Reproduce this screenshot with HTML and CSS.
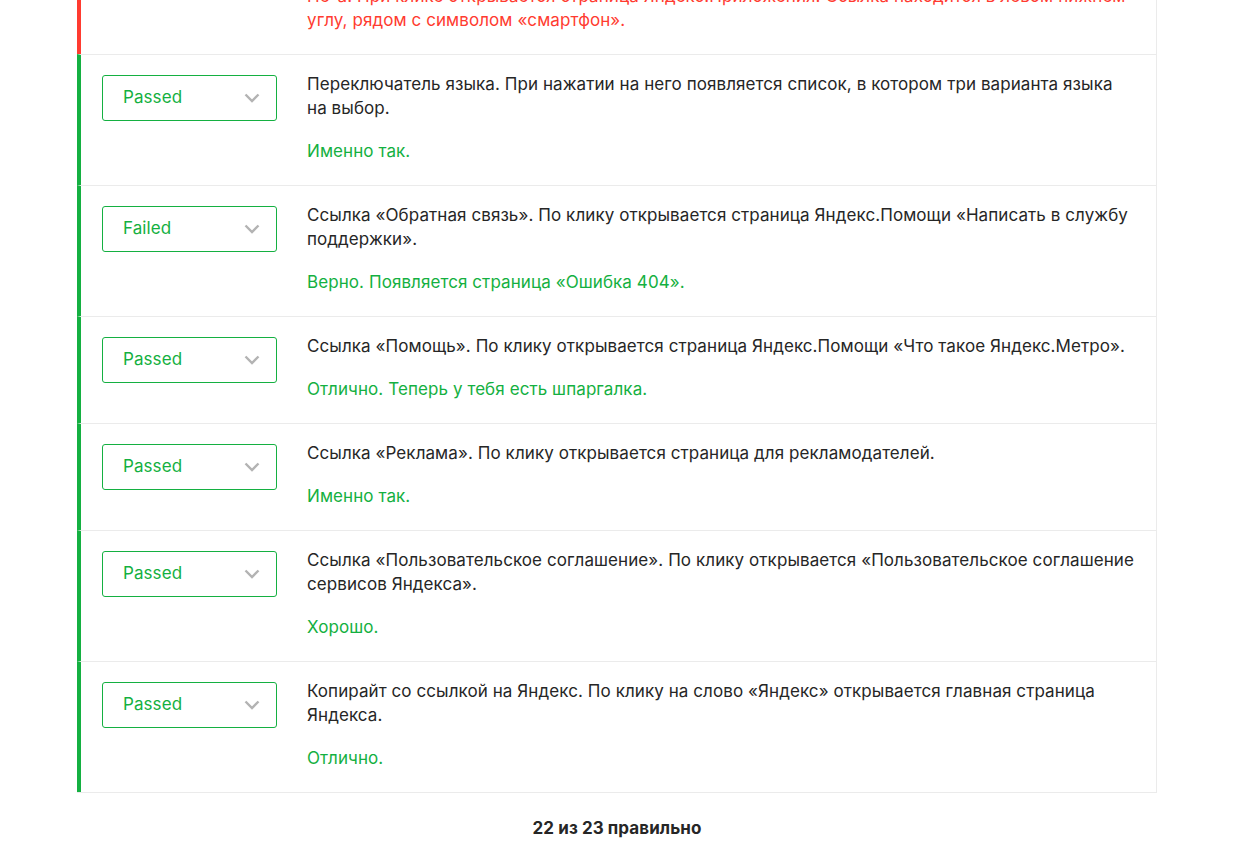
FILE: index.html
```html
<!DOCTYPE html>
<html lang="ru">
<head>
<meta charset="utf-8">
<title>Результаты</title>
<link rel="stylesheet" href="styles.css">
</head>
<body>
<main class="page">
  <div class="checklist">
    <div class="row row--wrong">
      <div class="select"><span class="select__value">Failed</span><svg class="chevron" viewBox="0 0 16 10" width="16" height="10"><path d="M1.5 1.5 L8 8 L14.5 1.5" fill="none" stroke="#b3b3b3" stroke-width="2.4"/></svg></div>
      <div class="body">
        <p class="desc">Ссылка «Мобильное приложение». По клику открывается страница Яндекс.Метро.</p>
        <p class="comment comment--bad">Не-а. При клике открывается страница Яндекс.Приложения. Ссылка находится в левом нижнем углу, рядом с символом «смартфон».</p>
      </div>
    </div>
    <div class="row">
      <div class="select"><span class="select__value">Passed</span><svg class="chevron" viewBox="0 0 16 10" width="16" height="10"><path d="M1.5 1.5 L8 8 L14.5 1.5" fill="none" stroke="#b3b3b3" stroke-width="2.4"/></svg></div>
      <div class="body">
        <p class="desc">Переключатель языка. При нажатии на него появляется список, в котором три варианта языка на выбор.</p>
        <p class="comment">Именно так.</p>
      </div>
    </div>
    <div class="row">
      <div class="select"><span class="select__value">Failed</span><svg class="chevron" viewBox="0 0 16 10" width="16" height="10"><path d="M1.5 1.5 L8 8 L14.5 1.5" fill="none" stroke="#b3b3b3" stroke-width="2.4"/></svg></div>
      <div class="body">
        <p class="desc">Ссылка «Обратная связь». По клику открывается страница Яндекс.Помощи «Написать в службу поддержки».</p>
        <p class="comment">Верно. Появляется страница «Ошибка 404».</p>
      </div>
    </div>
    <div class="row">
      <div class="select"><span class="select__value">Passed</span><svg class="chevron" viewBox="0 0 16 10" width="16" height="10"><path d="M1.5 1.5 L8 8 L14.5 1.5" fill="none" stroke="#b3b3b3" stroke-width="2.4"/></svg></div>
      <div class="body">
        <p class="desc">Ссылка «Помощь». По клику открывается страница Яндекс.Помощи «Что такое Яндекс.Метро».</p>
        <p class="comment">Отлично. Теперь у тебя есть шпаргалка.</p>
      </div>
    </div>
    <div class="row">
      <div class="select"><span class="select__value">Passed</span><svg class="chevron" viewBox="0 0 16 10" width="16" height="10"><path d="M1.5 1.5 L8 8 L14.5 1.5" fill="none" stroke="#b3b3b3" stroke-width="2.4"/></svg></div>
      <div class="body">
        <p class="desc">Ссылка «Реклама». По клику открывается страница для рекламодателей.</p>
        <p class="comment">Именно так.</p>
      </div>
    </div>
    <div class="row">
      <div class="select"><span class="select__value">Passed</span><svg class="chevron" viewBox="0 0 16 10" width="16" height="10"><path d="M1.5 1.5 L8 8 L14.5 1.5" fill="none" stroke="#b3b3b3" stroke-width="2.4"/></svg></div>
      <div class="body">
        <p class="desc">Ссылка «Пользовательское соглашение». По клику открывается «Пользовательское соглашение сервисов Яндекса».</p>
        <p class="comment">Хорошо.</p>
      </div>
    </div>
    <div class="row">
      <div class="select"><span class="select__value">Passed</span><svg class="chevron" viewBox="0 0 16 10" width="16" height="10"><path d="M1.5 1.5 L8 8 L14.5 1.5" fill="none" stroke="#b3b3b3" stroke-width="2.4"/></svg></div>
      <div class="body">
        <p class="desc">Копирайт со ссылкой на Яндекс. По клику на слово «Яндекс» открывается главная страница Яндекса.</p>
        <p class="comment">Отлично.</p>
      </div>
    </div>
  </div>
  <p class="score">22 из 23 правильно</p>
</main>
</body>
</html>
```

FILE: styles.css
```css
* { box-sizing: border-box; }
html, body { margin: 0; padding: 0; background: #fff; }
body {
  font-family: "Inter", "Liberation Sans", sans-serif;
  font-size: 17px;
  line-height: 24px;
  letter-spacing: 0.08px;
  color: #262626;
}
.page {
  width: 1080px;
  margin-left: 77px;
}
.checklist {
  margin-top: -77px;
  border-right: 1px solid #ebebeb;
  border-bottom: 1px solid #ebebeb;
}
.row {
  display: flex;
  gap: 30px;
  padding: 17px 20px 22px 21px;
  border-left: 4px solid #14b041;
  border-top: 1px solid #ebebeb;
}
.row--wrong { border-left-color: #ff3b30; }
.select {
  flex: 0 0 175px;
  height: 46px;
  margin-top: 3px;
  border: 1px solid #14b041;
  border-radius: 3px;
  display: flex;
  align-items: center;
  justify-content: space-between;
  padding: 0 16px 2px 20px;
}
.select__value { color: #14b041; }
.chevron { display: block; margin-top: 2px; }
.body { flex: 1; }
.desc, .comment { margin: 0; }
.comment { margin-top: 19px; color: #14b041; }
.comment--bad { color: #ff3b30; }
.score {
  margin: 23px 0 0;
  text-align: center;
  font-weight: 700;
  color: #262626;
}
```
